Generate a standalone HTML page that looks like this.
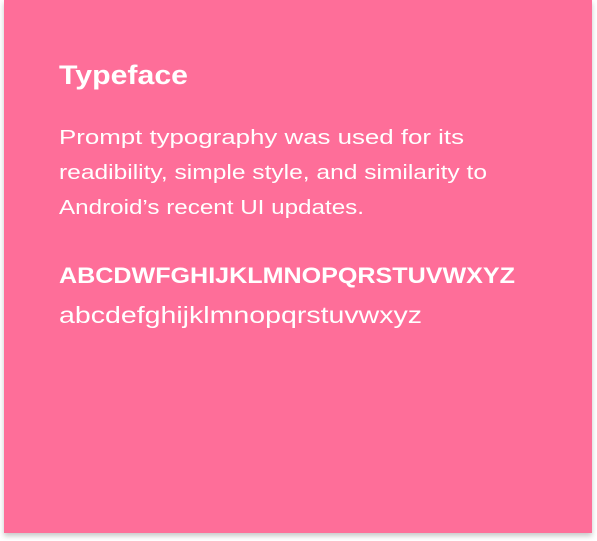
<!DOCTYPE html>
<html><head><style>
html,body{margin:0;padding:0;background:#fff;width:597px;height:541px;overflow:hidden}
.card{position:absolute;left:4px;top:0;width:588px;height:533px;background:#fe6e99;box-shadow:0 3px 5px rgba(0,0,0,0.22)}
svg{position:absolute;left:0;top:0}
text{font-family:"Liberation Sans",sans-serif;fill:#fff}
</style></head><body>
<div class="card"></div>
<svg width="597" height="541">
<text x="59" y="84" font-size="27" font-weight="bold" textLength="129" lengthAdjust="spacingAndGlyphs">Typeface</text>
<text x="59" y="144" font-size="20" textLength="405" lengthAdjust="spacingAndGlyphs">Prompt typography was used for its</text>
<text x="59" y="179" font-size="20" textLength="428" lengthAdjust="spacingAndGlyphs">readibility, simple style, and similarity to</text>
<text x="59" y="214" font-size="20" textLength="305" lengthAdjust="spacingAndGlyphs">Android’s recent UI updates.</text>
<text x="59" y="283" font-size="22" font-weight="bold" textLength="456" lengthAdjust="spacingAndGlyphs">ABCDWFGHIJKLMNOPQRSTUVWXYZ</text>
<text x="59" y="323" font-size="23" textLength="363" lengthAdjust="spacingAndGlyphs">abcdefghijklmnopqrstuvwxyz</text>
</svg>
</body></html>
